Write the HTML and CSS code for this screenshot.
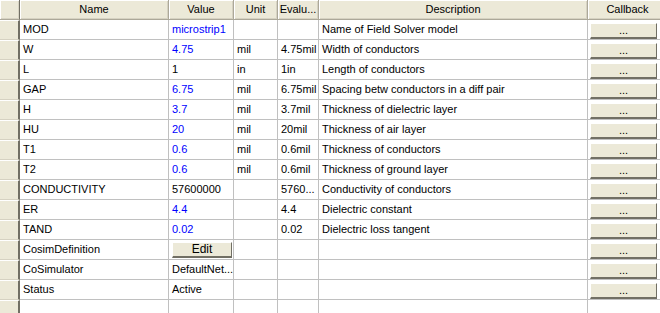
FILE: index.html
```html
<!DOCTYPE html>
<html>
<head>
<meta charset="utf-8">
<link rel="stylesheet" href="styles.css">
</head>
<body>
<div class="grid">
  <div class="hd corner"></div>
  <div class="hd">Name</div>
  <div class="hd">Value</div>
  <div class="hd">Unit</div>
  <div class="hd">Evalu...</div>
  <div class="hd">Description</div>
  <div class="hd">Callback</div>

  <div class="rh"></div><div class="c">MOD</div><div class="c v">microstrip1</div><div class="c"></div><div class="c"></div><div class="c">Name of Field Solver model</div><div class="c cb"><span class="btn dots">...</span></div>
  <div class="rh"></div><div class="c">W</div><div class="c v">4.75</div><div class="c">mil</div><div class="c">4.75mil</div><div class="c">Width of conductors</div><div class="c cb"><span class="btn dots">...</span></div>
  <div class="rh"></div><div class="c">L</div><div class="c">1</div><div class="c">in</div><div class="c">1in</div><div class="c">Length of conductors</div><div class="c cb"><span class="btn dots">...</span></div>
  <div class="rh"></div><div class="c">GAP</div><div class="c v">6.75</div><div class="c">mil</div><div class="c">6.75mil</div><div class="c">Spacing betw conductors in a diff pair</div><div class="c cb"><span class="btn dots">...</span></div>
  <div class="rh"></div><div class="c">H</div><div class="c v">3.7</div><div class="c">mil</div><div class="c">3.7mil</div><div class="c">Thickness of dielectric layer</div><div class="c cb"><span class="btn dots">...</span></div>
  <div class="rh"></div><div class="c">HU</div><div class="c v">20</div><div class="c">mil</div><div class="c">20mil</div><div class="c">Thickness of air layer</div><div class="c cb"><span class="btn dots">...</span></div>
  <div class="rh"></div><div class="c">T1</div><div class="c v">0.6</div><div class="c">mil</div><div class="c">0.6mil</div><div class="c">Thickness of conductors</div><div class="c cb"><span class="btn dots">...</span></div>
  <div class="rh"></div><div class="c">T2</div><div class="c v">0.6</div><div class="c">mil</div><div class="c">0.6mil</div><div class="c">Thickness of ground layer</div><div class="c cb"><span class="btn dots">...</span></div>
  <div class="rh"></div><div class="c">CONDUCTIVITY</div><div class="c">57600000</div><div class="c"></div><div class="c">5760...</div><div class="c">Conductivity of conductors</div><div class="c cb"><span class="btn dots">...</span></div>
  <div class="rh"></div><div class="c">ER</div><div class="c v">4.4</div><div class="c"></div><div class="c">4.4</div><div class="c">Dielectric constant</div><div class="c cb"><span class="btn dots">...</span></div>
  <div class="rh"></div><div class="c">TAND</div><div class="c v">0.02</div><div class="c"></div><div class="c">0.02</div><div class="c">Dielectric loss tangent</div><div class="c cb"><span class="btn dots">...</span></div>
  <div class="rh"></div><div class="c">CosimDefinition</div><div class="c ed"><span class="btn edit">Edit</span></div><div class="c"></div><div class="c"></div><div class="c"></div><div class="c cb"><span class="btn dots">...</span></div>
  <div class="rh"></div><div class="c">CoSimulator</div><div class="c">DefaultNet...</div><div class="c"></div><div class="c"></div><div class="c"></div><div class="c cb"><span class="btn dots">...</span></div>
  <div class="rh"></div><div class="c">Status</div><div class="c">Active</div><div class="c"></div><div class="c"></div><div class="c"></div><div class="c cb"><span class="btn dots">...</span></div>
  <div class="rh"></div><div class="c"></div><div class="c"></div><div class="c"></div><div class="c"></div><div class="c"></div><div class="c"></div>
</div>
</body>
</html>
```
FILE: styles.css
```css
html, body {
  margin: 0;
  padding: 0;
  background: #ffffff;
  overflow: hidden;
}
body {
  width: 660px;
  height: 313px;
  font-family: "Liberation Sans", Arial, sans-serif;
  font-size: 11px;
  color: #000000;
}
.grid {
  display: grid;
  grid-template-columns: 20px 149px 65px 44px 41px 269px 80px;
  grid-auto-rows: 20px;
  width: 668px;
}
.hd {
  background: #ece9d8;
  box-sizing: border-box;
  border-right: 1px solid #aca899;
  border-bottom: 1px solid #aca899;
  box-shadow: inset 1px 1px 0 #ffffff, inset -1px -1px 0 #d6d2c2;
  text-align: center;
  line-height: 19px;
  white-space: nowrap;
  overflow: hidden;
}
.hd.corner {
  border-right: 1px solid #716f64;
}
.rh {
  background: #ece9d8;
  box-sizing: border-box;
  border-right: 2px solid #716f64;
  border-top: 1px solid #ffffff;
  border-bottom: 1px solid #d6d2c2;
}
.c {
  box-sizing: border-box;
  border-right: 1px solid #c0c0c0;
  border-bottom: 1px solid #c0c0c0;
  padding-left: 3px;
  line-height: 19px;
  white-space: nowrap;
  overflow: hidden;
}
.v {
  color: #0000ff;
}
.cb {
  padding: 3px 0 0 2px;
}
.ed {
  padding: 2px 0 0 3px;
}
.btn {
  display: block;
  box-sizing: border-box;
  background: #ece9d8;
  border-top: 1px solid #ffffff;
  border-left: 1px solid #ffffff;
  border-right: 1px solid #716f64;
  border-bottom: 2px solid #716f64;
  text-align: center;
  line-height: 13px;
}
.btn.dots {
  width: 67px;
  height: 16px;
}
.btn.edit {
  width: 60px;
  height: 16px;
  font-size: 12px;
}
```
